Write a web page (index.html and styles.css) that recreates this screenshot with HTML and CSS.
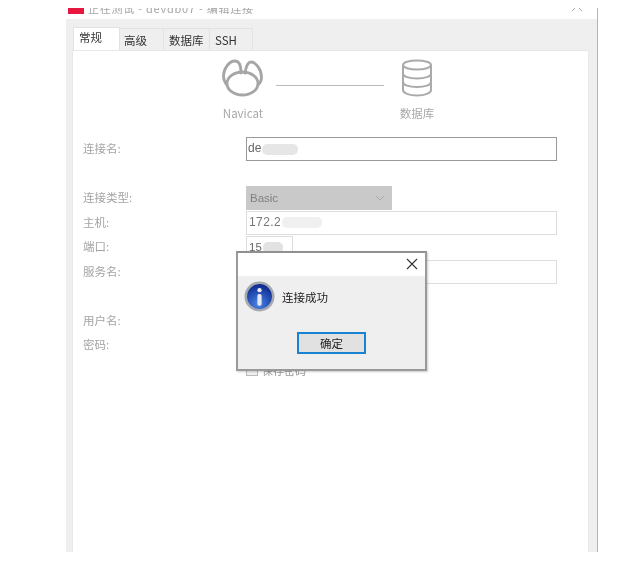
FILE: index.html
```html
<!DOCTYPE html>
<html lang="zh">
<head>
<meta charset="utf-8">
<title>连接成功</title>
<link rel="stylesheet" href="styles.css">
</head>
<body>
<div class="page">
  <div class="window">
    <div class="titlebar">
      <span class="app-icon"></span>
      <span class="title">正在测试 - devdb07 - 编辑连接</span>
      <svg class="title-close" width="12" height="12" viewBox="0 0 12 12"><path d="M1 1l10 10M11 1L1 11" stroke="#aaa" fill="none"/></svg>
    </div>
    <div class="tabs">
      <span class="tab active">常规</span>
      <span class="tab">高级</span>
      <span class="tab">数据库</span>
      <span class="tab">SSH</span>
    </div>
    <div class="panel">
      <div class="diagram">
        <div class="node">
          <svg width="42" height="38" viewBox="0 0 42 38" fill="none" stroke="#a6a6a6" stroke-width="2.800" stroke-linecap="round" stroke-linejoin="round">
            <ellipse cx="20.500" cy="24.500" rx="15.500" ry="11.500"/>
            <path d="M19 14C19 6 17 2 13 2 7 2 1.500 10 1.500 17c0 3 1 6 3.500 9"/>
            <path d="M23 14c1-6 3-11 6-11 5 0 10.500 8 10.500 15 0 3-1 6-3.500 8"/>
          </svg>
          <span class="node-label">Navicat</span>
        </div>
        <span class="link"></span>
        <div class="node">
          <svg width="32" height="38" viewBox="0 0 32 38" fill="none" stroke="#aaa" stroke-width="2">
            <ellipse cx="16" cy="6" rx="14" ry="4.500"/>
            <path d="M2 6v25c0 3 6 5.500 14 5.500S30 34 30 31V6M2 14.500c0 3 6 5 14 5s14-2 14-5M2 23c0 3 6 5 14 5s14-2 14-5"/>
          </svg>
          <span class="node-label">数据库</span>
        </div>
      </div>
      <div class="form">
        <label class="label">连接名:</label>
        <div class="field field-name">de<span class="smudge smudge-wide"></span></div>
        <div class="gap"></div>
        <label class="label">连接类型:</label>
        <div class="select">Basic<svg width="10" height="6" viewBox="0 0 10 6"><path d="M1 1l4 4 4-4" stroke="#aaa" fill="none"/></svg></div>
        <label class="label">主机:</label>
        <div class="field field-host">172.2<span class="smudge"></span></div>
        <label class="label">端口:</label>
        <div class="field field-port">15<span class="smudge smudge-short"></span></div>
        <label class="label">服务名:</label>
        <div class="field"></div>
        <div class="gap"></div>
        <label class="label">用户名:</label>
        <div class="field field-hidden"></div>
        <label class="label">密码:</label>
        <div class="field field-hidden"></div>
        <span></span>
        <div class="check"><span class="box"></span>保存密码</div>
      </div>
    </div>
  </div>
  <div class="dialog">
    <div class="dialog-head">
      <svg width="12" height="12" viewBox="0 0 12 12"><path d="M1 1l10 10M11 1L1 11" stroke="#333" stroke-width="1.100" fill="none"/></svg>
    </div>
    <div class="dialog-body">
      <div class="message">
        <svg width="31" height="31" viewBox="0 0 32 32">
          <defs>
            <radialGradient id="orb" cx="45%" cy="80%" r="75%">
              <stop offset="0" stop-color="#4a86e8"/>
              <stop offset="1" stop-color="#102c92"/>
            </radialGradient>
          </defs>
          <circle cx="16" cy="16" r="15.500" fill="#a4a9b0"/>
          <circle cx="16" cy="16" r="12.800" fill="url(#orb)"/>
          <circle cx="16" cy="9.500" r="2.200" fill="#eef1f7"/>
          <rect x="13.800" y="13.500" width="4.400" height="12" rx="1.800" fill="#e6e9f1"/>
        </svg>
        <span class="message-text">连接成功</span>
      </div>
      <button class="ok">确定</button>
    </div>
  </div>
</div>
</body>
</html>
```

FILE: styles.css
```css
* { box-sizing: border-box; }
html, body { margin: 0; height: 100%; background: #fff; overflow: hidden; }
body { font-family: "Noto Sans CJK SC", "Liberation Sans", sans-serif; font-size: 11px; }
.page { position: relative; width: 634px; height: 565px; padding: 8px 0 0 66px; }
.window {
  width: 532px; height: 544px; background: #efefef;
  border-right: 1px solid #b5b5b5; padding-right: 8px;
  display: flex; flex-direction: column; filter: blur(.5px);
}
.titlebar {
  height: 11px; flex: none; background: #fff; overflow: hidden;
  display: flex; padding: 0 14px 0 2px; color: #a6a6a6; margin-right: -8px;
}
.app-icon { width: 16px; height: 6px; background: #e8173f; flex: none; }
.title { margin: -7px 0 0 4px; line-height: 14px; height: 18px; letter-spacing: .75px; white-space: nowrap; }
.title-close { margin: -8px 0 0 auto; }
.tabs { display: flex; height: 31px; padding: 8px 0 0 7px; align-items: flex-end; flex: none; }
.tab {
  height: 22px; background: #efefef; border: 1px solid #e2e2e2; border-left: 0; border-bottom: 0;
  color: #333; font-size: 11.500px; line-height: 22px; padding: 0 4px; width: 44px;
}
.tab:nth-child(3) { width: 46px; padding: 0 5px; }
.tab:nth-child(4) { width: 43px; padding: 0 5px; }
.tab.active { background: #fff; height: 23px; width: 47px; border-left: 1px solid #e2e2e2; line-height: 19px; padding: 0 5px; }
.panel { flex: 1; margin-left: 6px; background: #fff; border: 1px solid #e8e8e8; border-bottom: 0; padding-top: 8px; }
.diagram { display: flex; align-items: flex-start; padding-left: 149px; height: 78px; }
.node { display: flex; flex-direction: column; align-items: center; width: 42px; }
.node:last-child { margin-left: 12px; }
.node:first-child { margin-right: 12px; }
.node-label { color: #a8a8a8; font-size: 11.500px; margin-top: 8px; line-height: 16px; white-space: nowrap; }
.node svg { display: block; height: 38px; }
.link { width: 108px; height: 1px; background: #bbb; margin: 26px 0 0; }
.form {
  display: grid; grid-template-columns: 163px 311px; grid-auto-rows: 24.500px;
  padding-left: 10px; color: #a4a4a4; align-items: center;
}
.label { font-size: 11.500px; line-height: 16px; padding-bottom: 2px; }
.gap { grid-column: 1 / -1; }
.field {
  height: 23.500px; border: 1px solid #ddd; background: #fff; color: #666;
  font-size: 11.500px; line-height: 20px; padding-left: 2px; font-family: "Liberation Sans", sans-serif; white-space: nowrap; overflow: hidden;
}
.field-name { border: 1px solid #999; height: 24px; color: #666; padding-left: 1px; font-size: 12px; }
.field-host { color: #777; font-size: 12px; letter-spacing: .4px; }
.field-port { width: 47px; }
.field-hidden { width: 146px; }
.select {
  width: 146px; height: 24px; background: #c9c9c9; color: #808080; padding: 0 7px 0 4px;
  display: flex; justify-content: space-between; align-items: center;
  font-family: "Liberation Sans", sans-serif; font-size: 11.500px;
}
.smudge { display: inline-block; width: 40px; height: 11px; background: #f0f0f0; vertical-align: middle; margin-left: 1px; border-radius: 5px; }
.smudge-wide { width: 36px; background: #e6e6e6; }
.smudge-short { width: 20px; background: #e2e2e2; }
.check { display: flex; align-items: center; gap: 4px; color: #999; padding-top: 1px; }
.box { width: 12px; height: 11px; border: 1px solid #bbb; background: #f0f0f0; flex: none; }
.dialog {
  position: absolute; left: 236px; top: 251px; width: 191px; height: 120px;
  border: 2px solid #9a9a9a; border-top-color: #909090; box-shadow: 1px 1px 2px rgba(0,0,0,.2); background: #efefef;
  display: flex; flex-direction: column; filter: blur(.35px);
}
.dialog-head { height: 23px; background: #fff; flex: none; display: flex; justify-content: flex-end; align-items: center; padding: 0 7px 2px 0; }
.dialog-head svg { display: block; }
.dialog-body { flex: 1; display: flex; flex-direction: column; align-items: center; padding-top: 5px; }
.message { align-self: stretch; display: flex; align-items: center; gap: 7px; padding-left: 6px; }
.message svg { display: block; flex: none; }
.message-text { color: #222; font-size: 11.500px; line-height: 16px; }
.ok {
  width: 69px; height: 22px; margin-top: 20px; border: 2px solid #1b82d2; background: #e1e1e1;
  font: 11.500px "Noto Sans CJK SC", sans-serif; color: #222; padding: 0;
}
```
